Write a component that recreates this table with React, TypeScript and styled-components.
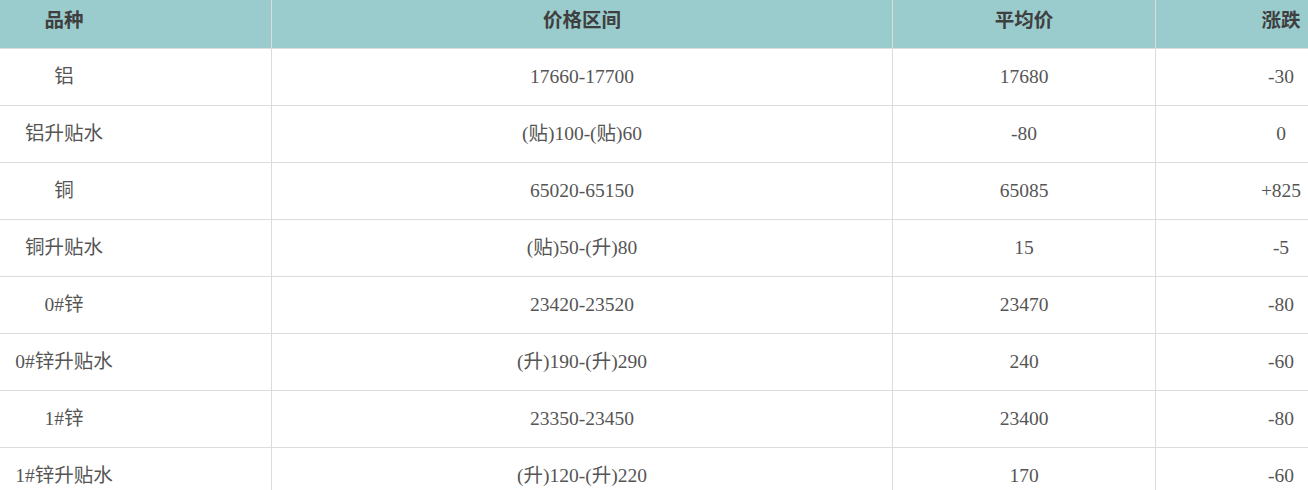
import React from "react";
import styled, { createGlobalStyle } from "styled-components";

const Global = createGlobalStyle`
  html, body { margin: 0; padding: 0; background: #fff; overflow: hidden; }
  body { font-family: "Liberation Serif", "Noto Sans CJK SC", serif; }
`;

const Table = styled.div`
  width: 1406px;
  display: grid;
  grid-template-columns: 271px 621px 263px 251px;
  font-size: 19.5px;
  line-height: 20px;
  color: #555;
`;

const Row = styled.div`
  display: contents;
`;

const Cell = styled.div<{ $head?: boolean; $first?: boolean }>`
  box-sizing: border-box;
  height: ${(p) => (p.$head ? 49 : 57)}px;
  display: flex;
  align-items: center;
  justify-content: center;
  border-bottom: 1px solid #dcdcdc;
  border-left: ${(p) => (p.$first ? "none" : "1px solid #dcdcdc")};
  padding-right: ${(p) => (p.$first ? 143 : 0)}px;
  padding-bottom: ${(p) => (p.$head ? 7 : 0)}px;
  background: ${(p) => (p.$head ? "#9acccd" : "#fff")};
  color: ${(p) => (p.$head ? "#3f3f3f" : "#555")};
  font-weight: ${(p) => (p.$head ? 700 : 400)};
  white-space: nowrap;
`;

const head = ["品种", "价格区间", "平均价", "涨跌"];
const rows = [
  ["铝", "17660-17700", "17680", "-30"],
  ["铝升贴水", "(贴)100-(贴)60", "-80", "0"],
  ["铜", "65020-65150", "65085", "+825"],
  ["铜升贴水", "(贴)50-(升)80", "15", "-5"],
  ["0#锌", "23420-23520", "23470", "-80"],
  ["0#锌升贴水", "(升)190-(升)290", "240", "-60"],
  ["1#锌", "23350-23450", "23400", "-80"],
  ["1#锌升贴水", "(升)120-(升)220", "170", "-60"],
];

export default function App() {
  return (
    <>
      <Global />
      <Table>
        <Row>
          {head.map((h, i) => (
            <Cell key={h} $head $first={i === 0}>
              {h}
            </Cell>
          ))}
        </Row>
        {rows.map((r, ri) => (
          <Row key={ri}>
            {r.map((c, i) => (
              <Cell key={i} $first={i === 0}>
                {c}
              </Cell>
            ))}
          </Row>
        ))}
      </Table>
    </>
  );
}
